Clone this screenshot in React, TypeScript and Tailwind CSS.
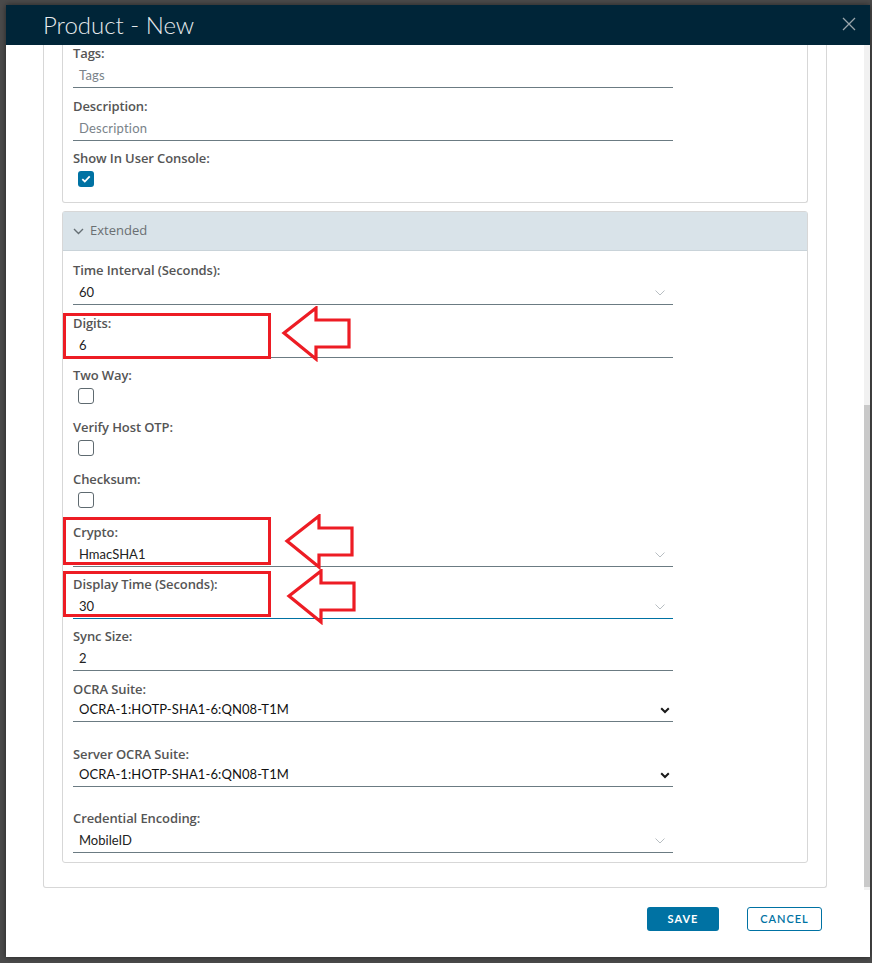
import React from "react";

const FONT = { fontFamily: "Lato, 'Open Sans', Arial, sans-serif" };
const LABEL_FONT = { fontFamily: "'Open Sans', Lato, Arial, sans-serif" };

function GrayChevron() {
  return (
    <svg width="10" height="6" viewBox="0 0 10 6" className="shrink-0">
      <path d="M0.5 0.5 L5 5 L9.5 0.5" fill="none" stroke="#b8bec2" strokeWidth="1" />
    </svg>
  );
}

function DarkChevron() {
  return (
    <svg width="10" height="7" viewBox="0 0 10 7" className="shrink-0">
      <path d="M1.2 1.2 L5 5 L8.8 1.2" fill="none" stroke="#1a1a1a" strokeWidth="2" />
    </svg>
  );
}

function Label({ children }: { children: React.ReactNode }) {
  return (
    <div
      className="h-[16px] flex items-center text-[13px] font-semibold text-[#555555] leading-none tracking-[-0.1px]"
      style={LABEL_FONT}
    >
      {children}
    </div>
  );
}

type FieldProps = {
  label: string;
  value?: string;
  placeholder?: string;
  chevron?: boolean;
  focused?: boolean;
  mb?: string;
};

function Field({ label, value, placeholder, chevron, focused, mb = "mb-[9px]" }: FieldProps) {
  return (
    <div className={mb}>
      <Label>{label}</Label>
      <div
        className={`w-[600px] h-[27px] flex items-center justify-between pl-[6px] pr-[8px] pt-[3px] border-b ${
          focused ? "border-[#0072a3]" : "border-[#6b7b82]"
        }`}
      >
        {value ? (
          <span className="text-[13px] text-[#222222]">{value}</span>
        ) : (
          <span className="text-[13px] text-[#7a838a] tracking-[0.2px]">{placeholder}</span>
        )}
        {chevron && <GrayChevron />}
      </div>
    </div>
  );
}

function SelectField({ label, value, mb = "mb-[25px]" }: { label: string; value: string; mb?: string }) {
  return (
    <div className={mb}>
      <Label>{label}</Label>
      <div className="w-[600px] h-[25px] flex items-center justify-between pl-[6px] pr-[3px] pt-[2px] border-b border-[#6b7b82]">
        <span className="text-[13px] text-[#111111] tracking-[0.1px]">{value}</span>
        <DarkChevron />
      </div>
    </div>
  );
}

function Checkbox({ checked }: { checked?: boolean }) {
  return checked ? (
    <div className="w-[16px] h-[16px] rounded-[3px] bg-[#0072a3] flex items-center justify-center">
      <svg width="10" height="8" viewBox="0 0 10 8">
        <path d="M1.3 4.2 L3.8 6.5 L8.7 1.4" fill="none" stroke="#ffffff" strokeWidth="1.8" />
      </svg>
    </div>
  ) : (
    <div className="w-[16px] h-[16px] rounded-[3px] border border-[#5f6a70] bg-white" />
  );
}

function CheckField({ label, checked, pb = "pb-[15px]" }: { label: string; checked?: boolean; pb?: string }) {
  return (
    <div className={pb}>
      <Label>{label}</Label>
      <div className="mt-[5px] pl-[5px]">
        <Checkbox checked={checked} />
      </div>
    </div>
  );
}

// Hollow left-pointing arrow used as a callout
function CalloutArrow({ left, top }: { left: number; top: number }) {
  return (
    <svg
      width="72"
      height="56"
      viewBox="0 0 72 56"
      className="absolute"
      style={{ left, top }}
    >
      <path
        d="M3 27 L35 2 L35 14 L68 14 L68 41 L35 41 L35 53 Z"
        fill="none"
        stroke="#ed1c24"
        strokeWidth="3.2"
        strokeLinejoin="miter"
      />
    </svg>
  );
}

function CalloutBox({ left, top, width, height }: { left: number; top: number; width: number; height: number }) {
  return (
    <div
      className="absolute border-[3px] border-[#ed1c24]"
      style={{ left, top, width, height }}
    />
  );
}

export default function App() {
  return (
    <div className="relative w-[872px] h-[963px] bg-[#4b4b4b] pt-[5px] pl-[6px] overflow-hidden" style={FONT}>
      <div className="w-[864px] h-[952px] bg-white flex flex-col shadow-[0_0_6px_rgba(0,0,0,0.5)]">
        {/* Header */}
        <div className="h-[40px] shrink-0 bg-[#002538] flex items-center justify-between pl-[37px] pr-[14px]">
          <span className="text-[24px] font-light text-[#e6eaec] leading-none">Product - New</span>
          <svg width="14" height="14" viewBox="0 0 14 14" className="mb-[2px]">
            <path d="M1 1 L13 13 M13 1 L1 13" stroke="#9aa5ab" strokeWidth="1.3" />
          </svg>
        </div>

        {/* Scroll area */}
        <div className="h-[845px] shrink-0 flex">
          <div className="flex-1 overflow-hidden pl-[37px]">
            <div className="w-[784px] border-x border-b border-[#d7d7d7] rounded-b-[3px] px-[18px] pb-[24px]">
              {/* General card (top scrolled out of view) */}
              <div className="border-x border-b border-[#d7d7d7] rounded-b-[3px] pl-[10px]">
                <Field label="Tags:" placeholder="Tags" mb="mb-[10px]" />
                <Field label="Description:" placeholder="Description" />
                <CheckField label="Show In User Console:" checked pb="pb-[15px]" />
              </div>

              {/* Extended card */}
              <div className="mt-[8px] border border-[#d7d7d7] rounded-[3px]">
                <div className="h-[39px] bg-[#d9e3e9] border-b border-[#c9d3d9] flex items-center pl-[10px] gap-[6px]">
                  <svg width="11" height="7" viewBox="0 0 11 7">
                    <path d="M1 1 L5.5 5.5 L10 1" fill="none" stroke="#666f74" strokeWidth="1.4" />
                  </svg>
                  <span className="text-[13px] text-[#6a6f72]" style={LABEL_FONT}>Extended</span>
                </div>
                <div className="pl-[10px] pt-[11px]">
                  <Field label="Time Interval (Seconds):" value="60" chevron mb="mb-[10px]" />
                  <Field label="Digits:" value="6" />
                  <CheckField label="Two Way:" />
                  <CheckField label="Verify Host OTP:" />
                  <CheckField label="Checksum:" pb="pb-[16px]" />
                  <Field label="Crypto:" value="HmacSHA1" chevron />
                  <Field label="Display Time (Seconds):" value="30" chevron focused mb="mb-[9px]" />
                  <Field label="Sync Size:" value="2" mb="mb-[10px]" />
                  <SelectField label="OCRA Suite:" value="OCRA-1:HOTP-SHA1-6:QN08-T1M" mb="mb-[24px]" />
                  <SelectField label="Server OCRA Suite:" value="OCRA-1:HOTP-SHA1-6:QN08-T1M" mb="mb-[23px]" />
                  <Field label="Credential Encoding:" value="MobileID" chevron mb="mb-[9px]" />
                </div>
              </div>
            </div>
          </div>
          {/* Scrollbar */}
          <div className="w-[6px] bg-[#f1f1f1] flex flex-col">
            <div className="h-[360px]" />
            <div className="flex-1 bg-[#c9c9c9] mb-[3px]" />
          </div>
        </div>

        {/* Footer */}
        <div className="flex-1 flex items-start justify-end gap-[28px] pt-[17px] pr-[48px]">
          <button className="w-[72px] h-[24px] rounded-[3px] bg-[#0072a3] text-white text-[11px] font-bold tracking-[1px]">
            SAVE
          </button>
          <button className="w-[75px] h-[24px] rounded-[3px] border border-[#0072a3] text-[#0072a3] text-[11px] font-semibold tracking-[1px]">
            CANCEL
          </button>
        </div>
      </div>

      {/* Red callouts */}
      <CalloutBox left={63} top={313} width={208} height={46} />
      <CalloutArrow left={281} top={306} />
      <CalloutBox left={63} top={517} width={208} height={48} />
      <CalloutArrow left={284} top={514} />
      <CalloutBox left={63} top={571} width={208} height={46} />
      <CalloutArrow left={286} top={569} />
    </div>
  );
}
